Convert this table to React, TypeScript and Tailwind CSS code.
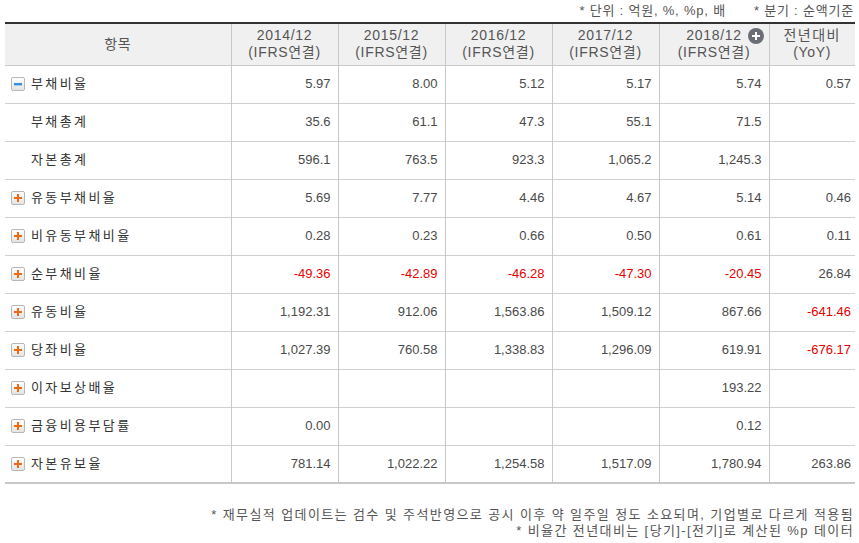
import React from 'react';

type Row = {
  label: string;
  icon: 'plus' | 'minus' | null;
  values: (string | null)[];
  yoy: string | null;
};

const years = ['2014/12', '2015/12', '2016/12', '2017/12', '2018/12'];

const rows: Row[] = [
  { label: '부채비율', icon: 'minus', values: ['5.97', '8.00', '5.12', '5.17', '5.74'], yoy: '0.57' },
  { label: '부채총계', icon: null, values: ['35.6', '61.1', '47.3', '55.1', '71.5'], yoy: null },
  { label: '자본총계', icon: null, values: ['596.1', '763.5', '923.3', '1,065.2', '1,245.3'], yoy: null },
  { label: '유동부채비율', icon: 'plus', values: ['5.69', '7.77', '4.46', '4.67', '5.14'], yoy: '0.46' },
  { label: '비유동부채비율', icon: 'plus', values: ['0.28', '0.23', '0.66', '0.50', '0.61'], yoy: '0.11' },
  { label: '순부채비율', icon: 'plus', values: ['-49.36', '-42.89', '-46.28', '-47.30', '-20.45'], yoy: '26.84' },
  { label: '유동비율', icon: 'plus', values: ['1,192.31', '912.06', '1,563.86', '1,509.12', '867.66'], yoy: '-641.46' },
  { label: '당좌비율', icon: 'plus', values: ['1,027.39', '760.58', '1,338.83', '1,296.09', '619.91'], yoy: '-676.17' },
  { label: '이자보상배율', icon: 'plus', values: [null, null, null, null, '193.22'], yoy: null },
  { label: '금융비용부담률', icon: 'plus', values: ['0.00', null, null, null, '0.12'], yoy: null },
  { label: '자본유보율', icon: 'plus', values: ['781.14', '1,022.22', '1,254.58', '1,517.09', '1,780.94'], yoy: '263.86' },
];

const kr = "font-['Liberation_Sans','Noto_Sans_CJK_KR',sans-serif]";

function ToggleIcon({ kind }: { kind: 'plus' | 'minus' }) {
  return (
    <span className="flex h-[14px] w-[14px] shrink-0 items-center justify-center rounded-[2px] border border-[#b8b8b8] bg-gradient-to-b from-white to-[#e4e4e4]">
      {kind === 'plus' ? (
        <svg width="8" height="8" viewBox="0 0 8 8">
          <path d="M3 0h2v3h3v2H5v3H3V5H0V3h3z" fill="#f26a10" />
        </svg>
      ) : (
        <svg width="8" height="8" viewBox="0 0 8 8">
          <rect x="0" y="3" width="8" height="2.4" fill="#3a8ee0" />
        </svg>
      )}
    </span>
  );
}

function isRed(v: string | null) {
  return !!v && v.startsWith('-');
}

export default function App() {
  return (
    <div className={`h-[543px] w-[859px] bg-white px-[5px] pt-[3px] text-[#333] ${kr}`}>
      {/* Units */}
      <div className="flex h-[19px] justify-end gap-[28px] text-[13px] leading-[16px] tracking-[0.8px] text-[#555]">
        <span>* 단위 : 억원, %, %p, 배</span>
        <span>* 분기 : 순액기준</span>
      </div>

      <table className="w-[850px] table-fixed border-collapse border-t-2 border-b-2 border-t-[#333] border-b-[#c8c8c8]">
        <colgroup>
          <col className="w-[226px]" />
          <col className="w-[107px]" />
          <col className="w-[107px]" />
          <col className="w-[107px]" />
          <col className="w-[107px]" />
          <col className="w-[110px]" />
          <col />
        </colgroup>
        <thead>
          <tr className="h-[42px] bg-[#f0f0f0] text-[14px] leading-[17px] tracking-[0.7px] text-[#555]">
            <th className="border-b border-[#c8c8c8] font-normal">항목</th>
            {years.map((y, i) => (
              <th key={y} className="relative border-b border-l border-[#c8c8c8] font-normal">
                <div>{y}</div>
                <div>(IFRS연결)</div>
                {i === years.length - 1 && (
                  <span className="absolute right-[5px] top-[4px] flex h-[16px] w-[16px] items-center justify-center rounded-full bg-[#6b6f75]">
                    <svg width="10" height="10" viewBox="0 0 10 10">
                      <path d="M4 1h2v3h3v2H6v3H4V6H1V4h3z" fill="#fff" />
                    </svg>
                  </span>
                )}
              </th>
            ))}
            <th className="border-b border-l border-[#c8c8c8] font-normal">
              <div className="tracking-[1.5px]">전년대비</div>
              <div>(YoY)</div>
            </th>
          </tr>
        </thead>
        <tbody>
          {rows.map((r, idx) => (
            <tr
              key={r.label}
              className={`h-[38px] text-[13px] ${idx < rows.length - 1 ? 'border-b border-[#d0d0d0]' : ''}`}
            >
              <td className="pl-[6px]">
                <div className="flex items-center gap-[6px]">
                  {r.icon ? <ToggleIcon kind={r.icon} /> : <span className="w-[14px]" />}
                  <span className="tracking-[2.4px] text-[#333]">{r.label}</span>
                </div>
              </td>
              {r.values.map((v, i) => (
                <td
                  key={i}
                  className={`border-l border-[#c8c8c8] pr-[7px] text-right ${isRed(v) ? 'text-[#e60000]' : 'text-[#4a4a4a]'}`}
                >
                  {v ?? ''}
                </td>
              ))}
              <td className={`border-l border-[#c8c8c8] pr-[4px] text-right ${isRed(r.yoy) ? 'text-[#e60000]' : 'text-[#4a4a4a]'}`}>
                {r.yoy ?? ''}
              </td>
            </tr>
          ))}
        </tbody>
      </table>

      {/* Footnotes */}
      <div className="mt-[23px] flex flex-col items-end text-[13px] leading-[16px] tracking-[1.4px] text-[#555]">
        <span>* 재무실적 업데이트는 검수 및 주석반영으로 공시 이후 약 일주일 정도 소요되며, 기업별로 다르게 적용됨</span>
        <span>* 비율간 전년대비는 [당기]-[전기]로 계산된 %p 데이터</span>
      </div>
    </div>
  );
}
